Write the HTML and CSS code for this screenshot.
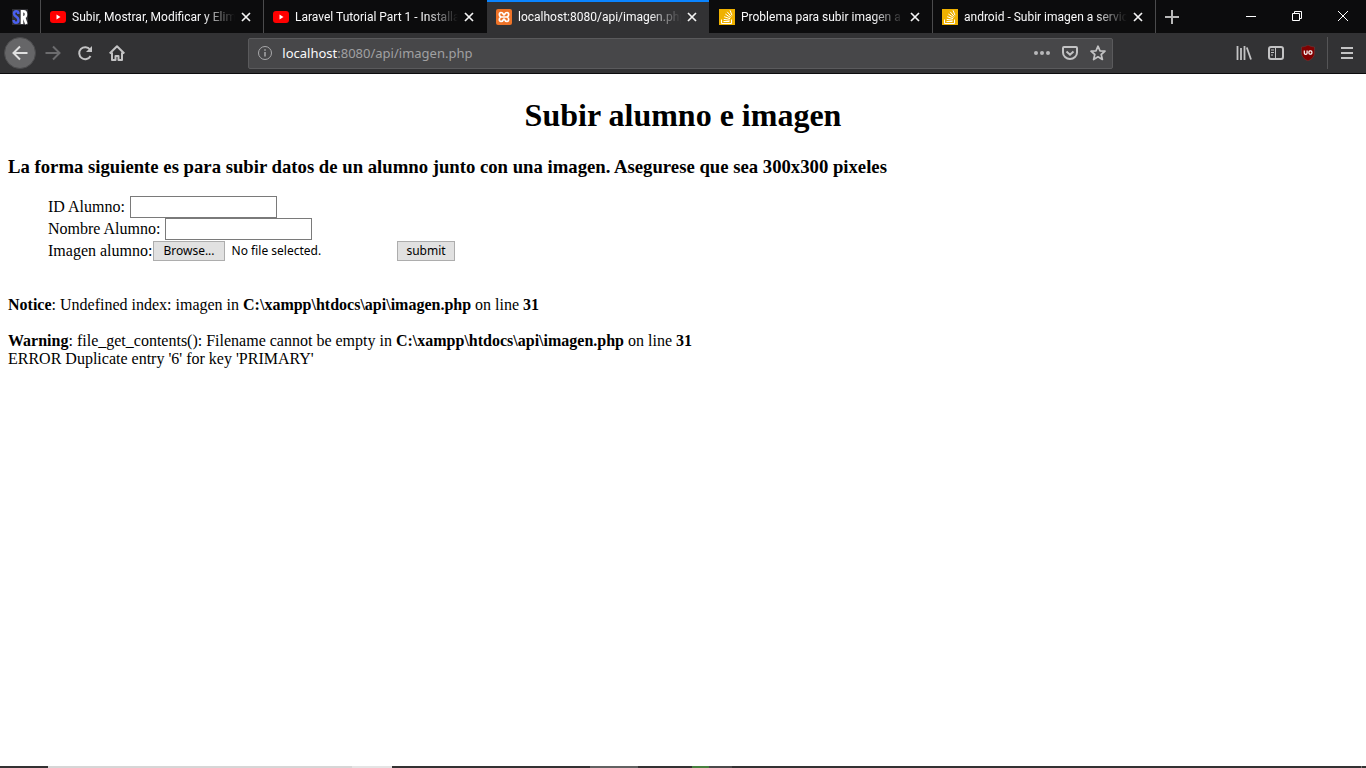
FILE: index.html
```html
<!DOCTYPE html>
<html lang="es">
<head>
<meta charset="utf-8">
<title>localhost:8080/api/imagen.php</title>
<link rel="stylesheet" href="styles.css">
</head>
<body>
<svg class="defs" width="0" height="0" aria-hidden="true">
  <symbol id="youtube" viewBox="0 0 16 16"><rect y="2" width="16" height="12" rx="3" fill="#f00"/><path d="M6.500 5.500v5L10.500 8z" fill="#fff"/></symbol>
  <symbol id="stack" viewBox="0 0 16 16"><rect width="16" height="16" fill="#efb100"/><path d="M2.500 10.500v4h10v-4M4.500 12.500h6M4.700 10.400l6 .8M5.200 7.700l5.800 2M6.300 5l5.200 3.500M8.200 2.800l4 4.700M11 1.300l2 5" fill="none" stroke="#fff"/></symbol>
  <symbol id="close" viewBox="0 0 10 10"><path d="M1 1l8 8M9 1l-8 8" fill="none" stroke="#f4f4f4" stroke-width="1.700"/></symbol>
</svg>

<header class="browser">
  <div class="tabstrip">
    <a class="tab pinned" href="#" aria-label="SR">
      <svg class="icon" viewBox="0 0 16 16"><rect width="16" height="16" fill="#303034"/><path d="M6.300 5V3.500Q6 2.200 4.200 2.200 2 2.200 2 4.500q0 2 2.200 3.200t2.200 3.300Q6.400 13.800 4 13.800 1.800 13.800 1.600 11" fill="none" stroke="#4a60f0" stroke-width="2.500"/><path d="M10 15V2.200h1.500q2.500 0 2.500 3T11.500 8.200H10M12 8l2.300 7" fill="none" stroke="#fff" stroke-width="2.600"/></svg>
    </a>
    <div class="tab">
      <svg class="icon"><use href="#youtube"/></svg>
      <a class="title" href="#">Subir, Mostrar, Modificar y Elim</a>
      <button class="close" aria-label="Cerrar"><svg><use href="#close"/></svg></button>
    </div>
    <div class="tab before-active">
      <svg class="icon"><use href="#youtube"/></svg>
      <a class="title" href="#">Laravel Tutorial Part 1 - Installa</a>
      <button class="close" aria-label="Cerrar"><svg><use href="#close"/></svg></button>
    </div>
    <div class="tab active">
      <svg class="icon" viewBox="0 0 16 16"><rect width="16" height="16" rx="2" fill="#ee7328"/><path d="M8 8H5.500M8 8h2.500M5.500 8C3 8 2.500 3.500 5 3.500S7 6 8 6s.5-2.500 3-2.500S13 8 10.500 8M5.500 8C3 8 2.500 12.500 5 12.500S7 10 8 10s.5 2.500 3 2.500S13 8 10.500 8" fill="none" stroke="#fff" stroke-width="1.700"/></svg>
      <a class="title" href="#">localhost:8080/api/imagen.php</a>
      <button class="close" aria-label="Cerrar"><svg><use href="#close"/></svg></button>
    </div>
    <div class="tab">
      <svg class="icon"><use href="#stack"/></svg>
      <a class="title" href="#">Problema para subir imagen a s</a>
      <button class="close" aria-label="Cerrar"><svg><use href="#close"/></svg></button>
    </div>
    <div class="tab">
      <svg class="icon"><use href="#stack"/></svg>
      <a class="title" href="#">android - Subir imagen a servic</a>
      <button class="close" aria-label="Cerrar"><svg><use href="#close"/></svg></button>
    </div>
    <button class="new-tab" aria-label="Nueva pestaña"><svg class="icon" viewBox="0 0 16 16"><path d="M8 1v14M1 8h14" stroke="#b8b8b8" stroke-width="2"/></svg></button>
    <div class="window-buttons">
      <button aria-label="Minimizar"><svg width="10" height="10"><path d="M0 5.500h10" stroke="#fff"/></svg></button>
      <button aria-label="Restaurar"><svg width="10" height="10" fill="none" stroke="#fff"><path d="M.5 2.500h7v7h-7zM2.500 2.500v-2h7v7h-2"/></svg></button>
      <button aria-label="Cerrar ventana"><svg width="10" height="10"><path d="M0 0l10 10M10 0L0 10" stroke="#fff"/></svg></button>
    </div>
  </div>

  <div class="toolbar">
    <div class="nav">
      <button class="back" aria-label="Atrás"><svg class="icon line" viewBox="0 0 16 16"><path d="M15.500 8H1.500M8 1.500L1.500 8 8 14.500"/></svg></button>
      <button aria-label="Adelante" class="forward"><svg class="icon line" viewBox="0 0 16 16"><path d="M.5 8h14M8 1.500L14.500 8 8 14.500"/></svg></button>
      <button aria-label="Recargar"><svg class="icon line" viewBox="0 0 16 16"><path d="M13 4.500A6 6 0 1 0 13.500 11"/><path d="M15 1v6H9z" fill="#c3c3c4" stroke="none"/></svg></button>
      <button aria-label="Inicio"><svg class="icon line" viewBox="0 0 16 16"><path d="M.7 8.500L8 1.200l7.300 7.300M3 7.500V15h3.500v-4h3v4H13V7.500" stroke-linejoin="round"/></svg></button>
    </div>
    <div class="spring"></div>
    <div class="urlbar">
      <svg class="icon info" viewBox="0 0 16 16" fill="none" stroke="#a9a9ab"><circle cx="8" cy="8" r="6.500"/><path d="M8 7v4.500M8 4.200v1.600" stroke-width="1.500"/></svg>
      <a class="url" href="#"><span class="host">localhost</span>:8080/api/imagen.php</a>
      <div class="page-actions">
        <button aria-label="Acciones"><svg class="icon" viewBox="0 0 16 16" fill="#b8b8ba"><circle cx="2" cy="8" r="2"/><circle cx="8" cy="8" r="2"/><circle cx="14" cy="8" r="2"/></svg></button>
        <button aria-label="Pocket"><svg class="icon line" viewBox="0 0 16 16"><path d="M2 2h12q1 0 1 1v4.500a7 6.500 0 0 1-14 0V3q0-1 1-1zM4.500 6.500L8 9.700l3.500-3.200"/></svg></button>
        <button aria-label="Marcador"><svg class="icon line" viewBox="0 0 16 16"><path d="M8 1.200l2 4.600 5 .4-3.800 3.300 1.200 5L8 11.800l-4.400 2.700 1.200-5L1 6.200l5-.4z" stroke-width="1.700" stroke-linejoin="round"/></svg></button>
      </div>
    </div>
    <div class="spring"></div>
    <div class="nav">
      <button aria-label="Biblioteca"><svg class="icon line" viewBox="0 0 16 16"><path d="M1.500 1v14M5 3v12M8.500 1v14M10.800 2.500L15 14.500" stroke-width="1.800"/></svg></button>
      <button aria-label="Barra lateral"><svg class="icon line" viewBox="0 0 16 16"><rect x="1" y="2" width="14" height="12" rx="2"/><path d="M7.500 2v12" stroke-width="1"/><path d="M3 5h3M3 7.500h3M3 10h2" stroke-width="1"/></svg></button>
      <button aria-label="uBlock"><svg class="icon" viewBox="0 0 16 16"><path d="M8 0q3 2 6.500 2v6q0 5-6.500 8Q1.500 13 1.500 8V2Q5 2 8 0z" fill="#800000" stroke="#6b3b3b" stroke-width=".6"/><path d="M4.300 5.500v2.800q0 1 1.400 1t1.400-1V5.500" fill="none" stroke="#fff" stroke-width="1.200"/><rect x="8.900" y="5.900" width="3" height="3.200" rx="1" fill="none" stroke="#fff" stroke-width="1.200"/></svg></button>
      <button class="menu" aria-label="Menú"><svg class="icon line" viewBox="0 0 16 16"><path d="M2 3h12M2 8h12M2 13h12"/></svg></button>
    </div>
  </div>
</header>

<main class="page">
  <h1>Subir alumno e imagen</h1>
  <h3>La forma siguiente es para subir datos de un alumno junto con una imagen. Asegurese que sea 300x300 pixeles</h3>
  <form class="form">
    <div class="row"><label for="id">ID Alumno:</label><input class="text" id="id" type="text"></div>
    <div class="row"><label for="nombre">Nombre Alumno:</label><input class="text" id="nombre" type="text"></div>
    <div class="row upload">
      <label for="imagen">Imagen alumno:</label>
      <div class="file"><span class="button">Browse...</span><span>No file selected.</span><input id="imagen" type="file"></div>
      <button class="button submit" type="button">submit</button>
    </div>
  </form>
  <br>
  <b>Notice</b>: Undefined index: imagen in <b>C:\xampp\htdocs\api\imagen.php</b> on line <b>31</b><br>
  <br>
  <b>Warning</b>: file_get_contents(): Filename cannot be empty in <b>C:\xampp\htdocs\api\imagen.php</b> on line <b>31</b><br>
  ERROR Duplicate entry '6' for key 'PRIMARY'
</main>

<footer class="taskbar"><span class="search"></span><span class="search-end"></span><span class="app"></span><span class="progress"></span><span class="app-rest"></span><span class="peek"></span></footer>
</body>
</html>
```

FILE: styles.css
```css
* { box-sizing: border-box; }
body {
  margin: 0;
  min-height: 100vh;
  display: flex;
  flex-direction: column;
  background: #fff;
  color: #000;
  font: 16px/18px "Liberation Serif", serif;
}
.defs { position: absolute; }
.browser { font: 12px/16px Roboto, "Open Sans", sans-serif; color: #f9f9fa; }
.browser button { border: 0; padding: 0; background: none; display: flex; align-items: center; justify-content: center; }
.browser a { color: inherit; text-decoration: none; }
.icon { width: 16px; height: 16px; flex: none; display: block; }
.line { fill: none; stroke: #c3c3c4; stroke-width: 2; }

.tabstrip { display: flex; height: 33px; background: #0c0c0d; }
.tab {
  flex: 0 1 223px;
  min-width: 0;
  display: flex;
  align-items: center;
  gap: 6px;
  padding: 1px 12px 0 9px;
  border-right: 1px solid #4b4b4c;
}
.pinned { flex: 0 0 41px; padding-left: 12px; }
.before-active { border-color: #0c0c0d; }
.active { background: #323234; border-color: #0c0c0d; box-shadow: inset 0 2px #0a84ff; }
.title {
  flex: 1;
  min-width: 0;
  overflow: hidden;
  white-space: nowrap;
  mask-image: linear-gradient(to left, transparent, #000 32px);
}
.close svg { width: 10px; height: 10px; }
.new-tab { width: 32px; }
.window-buttons { display: flex; margin-left: auto; }
.window-buttons button { width: 46px; padding-bottom: 1px; }

.toolbar { display: flex; align-items: center; height: 41px; background: #323234; border-bottom: 1px solid #0c0c0d; }
.nav { display: flex; align-items: center; height: 40px; }
.nav button { width: 32px; height: 32px; }
.nav .back { margin: 0 1px 0 4px; border: 1px solid #4a4a4c; border-radius: 50%; background: #666668; }
.back .line { stroke: #e0e0e0; }
.forward .line { stroke: #6c6c6e; }
.spring { flex: 117; }
.urlbar {
  flex: 861;
  display: flex;
  align-items: center;
  height: 31px;
  padding: 0 6px 0 8px;
  border: 1px solid #5a5a5c;
  border-radius: 2px;
  background: #474749;
}
.url { margin-left: 9px; font: 13px/16px "Noto Sans", sans-serif; }
.browser .url { color: #a0a0a2; }
.host { color: #f9f9fa; }
.page-actions { display: flex; gap: 12px; margin-left: auto; }
.nav .menu { width: 39px; margin-left: 3px; border-left: 1px solid #555557; }

.page { flex: 1; padding: 0 8px; }
h1 { margin: 22px 0; line-height: 38px; text-align: center; }
h3 { margin: 22px 0 18px; line-height: 22px; }
.form { margin: 0 0 16px; padding-left: 40px; }
.row { display: flex; align-items: center; gap: 5px; height: 22px; }
.text { width: 147px; height: 22px; border: 1px solid #7a7a7a; padding: 2px; }
.upload { gap: 1px; }
.file { position: relative; display: flex; align-items: center; gap: 7px; width: 243px; font: 12px/16px "Noto Sans", sans-serif; }
.file input { position: absolute; inset: 0; width: 100%; opacity: 0; }
.button {
  height: 20px;
  padding: 1px 9px;
  border: 1px solid #adadad;
  background: #e1e1e1;
  color: #000;
  font: 12px/16px "Noto Sans", sans-serif;
}
.submit { padding: 1px 8px; }

.taskbar { display: flex; height: 2px; background: #343233; }
.search { width: 304px; margin-left: 48px; background: #d6d6d6; }
.search-end { width: 40px; background: #e4e4e4; }
.app { width: 48px; margin-left: 198px; background: #626262; }
.progress { width: 17px; margin-left: 54px; background: #47803f; }
.app-rest { width: 23px; background: #4b4a4b; }
.peek { width: 1px; margin: 0 4px 0 auto; background: #777; }
```
